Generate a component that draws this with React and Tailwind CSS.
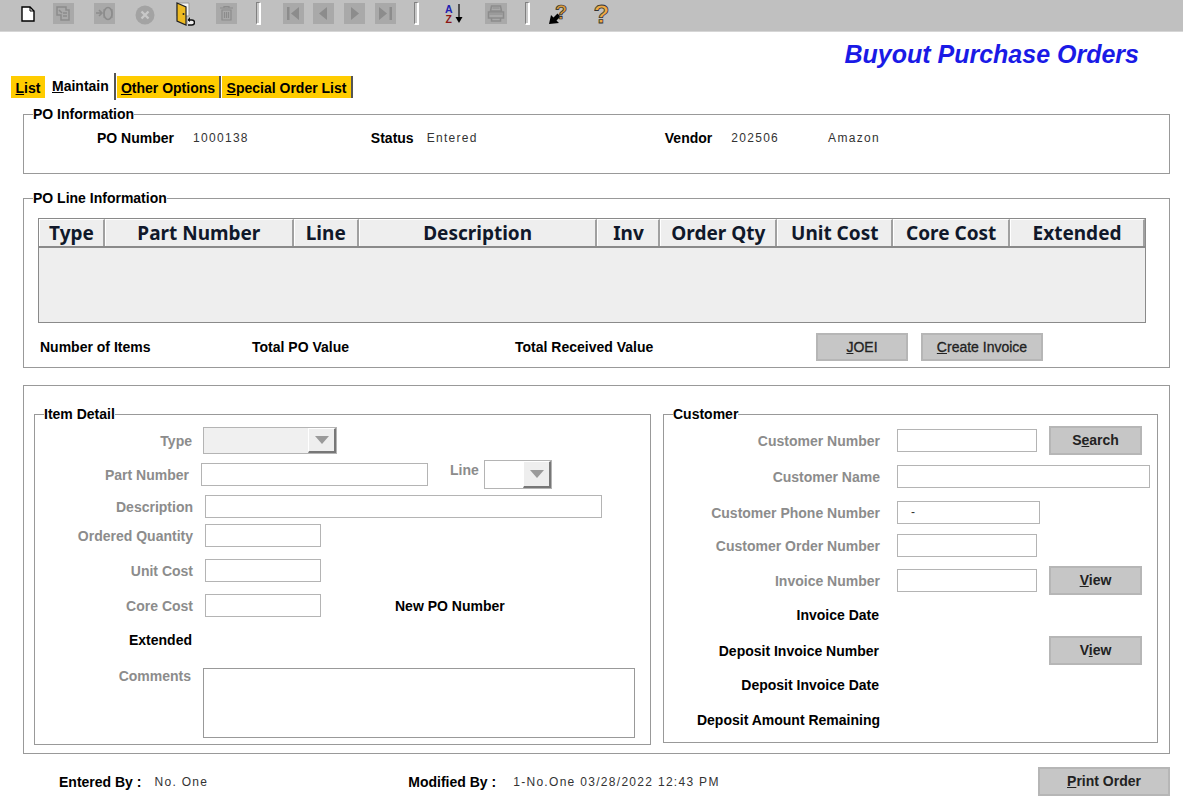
const labelGray = "font-bold text-[14px] leading-4 text-[#8c8c8c] text-right whitespace-nowrap"
const labelBlack = "font-bold text-[14px] leading-4 text-black whitespace-nowrap"
const valueText = "text-[12px] leading-4 tracking-[1.3px] text-[#333] whitespace-nowrap"
const inputBox = "h-[23px] border border-[#b4b4b4] bg-white"
const btn = "flex items-center justify-center bg-[#c6c6c6] border-2 border-[#b6b6b6] text-[14px] font-bold text-[#222]"
const legend = "ml-[9px] h-4 leading-4 font-bold text-[14px] text-black whitespace-nowrap"

const Separator = ({ className }) => (
  <div className={`w-[5px] h-[23px] mt-[2px] bg-[#c8c8c8] border-l border-t border-[#808080] border-r-2 border-b-2 border-r-white border-b-white rounded-[1px] ${className}`}></div>
)

const DisabledIcon = ({ className, children }) => (
  <svg viewBox="0 0 21 21" className={`w-[21px] h-[21px] mt-[3px] bg-[#a9a9a9] ${className}`}>
    {children}
  </svg>
)

const Toolbar = () => (
  <div className="flex items-start h-[32px] bg-[#c0c0c0] border-b border-[#d6d6d6]">
    {/* new */}
    <svg viewBox="0 0 14 16" className="w-[14px] h-[16px] mt-[6px] ml-[21px]">
      <path d="M1 1h8l4 4v10H1z" fill="#fff" stroke="#000" strokeWidth="1.4" />
      <path d="M9 1v4h4" fill="none" stroke="#000" />
    </svg>
    {/* edit */}
    <DisabledIcon className="ml-[18px]">
      <path d="M4 4h9v3h3v10H8v-5H4z" fill="none" stroke="#8c8c8c" strokeWidth="1.5" />
      <path d="M10 10h4M10 13h4M6 7l3 3" stroke="#8c8c8c" strokeWidth="1.5" />
    </DisabledIcon>
    {/* save */}
    <DisabledIcon className="ml-[20px]">
      <path d="M2 10h5M5 7l3 3-3 3" fill="none" stroke="#8c8c8c" strokeWidth="1.5" />
      <ellipse cx="14" cy="10.500" rx="4" ry="6" fill="none" stroke="#8c8c8c" strokeWidth="1.6" />
      <path d="M10 6v9M18 6v9" stroke="#8c8c8c" />
    </DisabledIcon>
    {/* cancel */}
    <svg viewBox="0 0 20 20" className="w-[20px] h-[20px] mt-[5px] ml-[20px]">
      <circle cx="10" cy="10" r="9.500" fill="#a3a3a3" />
      <path d="M6.500 6.500l7 7M13.500 6.500l-7 7" stroke="#c8c8c8" strokeWidth="2.400" />
    </svg>
    {/* exit door */}
    <svg viewBox="0 0 19 25" className="w-[19px] h-[25px] mt-[2px] ml-[21px]">
      <path d="M1 1h12v13H1z" fill="#f4f4f4" stroke="#999" />
      <path d="M1 1l9 4v18L1 19z" fill="#eebb22" stroke="#222" strokeWidth="1.200" />
      <circle cx="7.500" cy="12" r="1" fill="#222" />
      <path d="M12 18h4a2 2 0 0 1 0 5h-4" fill="#eee" stroke="#111" strokeWidth="1.500" />
      <path d="M14 15l-2.500 3 2.500 2z" fill="#111" />
    </svg>
    {/* delete */}
    <DisabledIcon className="ml-[21px]">
      <path d="M6 7h9v10H6zM4 5h13M8 5V3.500h5V5M8.500 9v6M10.500 9v6M12.500 9v6" fill="none" stroke="#8c8c8c" strokeWidth="1.200" />
    </DisabledIcon>
    <Separator className="ml-[19px]" />
    <DisabledIcon className="ml-[22px]">
      <path d="M4 4h2.500v13H4zM16 4v13L8 10.500z" fill="#8c8c8c" />
    </DisabledIcon>
    <DisabledIcon className="ml-[9px] w-[19px]">
      <path d="M14 4v13L6 10.500z" fill="#8c8c8c" />
    </DisabledIcon>
    <DisabledIcon className="ml-[10px] w-[19px]">
      <path d="M7 4v13l8-6.500z" fill="#8c8c8c" />
    </DisabledIcon>
    <DisabledIcon className="ml-[10px] w-[19px]">
      <path d="M14.500 4H17v13h-2.500zM4 4v13l8-6.500z" fill="#8c8c8c" />
    </DisabledIcon>
    <Separator className="ml-[18px]" />
    {/* sort */}
    <svg viewBox="0 0 19 20" className="w-[19px] h-[20px] mt-[4px] ml-[26px]">
      <text x="0" y="9" fontSize="10.500" fontWeight="700" fill="#2020b0" fontFamily="Liberation Sans, sans-serif">A</text>
      <text x="0.500" y="19" fontSize="10.500" fontWeight="700" fill="#8c1515" fontFamily="Liberation Sans, sans-serif">Z</text>
      <path d="M14 0v14" stroke="#000" strokeWidth="1.200" />
      <path d="M10.500 13h7L14 19z" fill="#000" />
    </svg>
    {/* print */}
    <DisabledIcon className="ml-[21px] w-[22px]">
      <path d="M6 3h9l1 5H5zM3 9h15v6H3zM6 15h9v3H6z" fill="none" stroke="#8c8c8c" strokeWidth="1.500" />
      <path d="M4 11h13M7 5h7" stroke="#8c8c8c" />
    </DisabledIcon>
    <Separator className="ml-[18px]" />
    {/* context help */}
    <svg viewBox="0 0 21 22" className="w-[21px] h-[22px] mt-[3px] ml-[19px]">
      <path d="M0 21l2-9 2.500 2.500 4-4 3 3-4 4 2.500 2.500z" fill="#000" />
      <text x="6" y="16" fontSize="20" fontWeight="700" fill="#d89a3c" stroke="#222" strokeWidth="0.700" fontFamily="Liberation Sans, sans-serif">?</text>
    </svg>
    {/* help */}
    <svg viewBox="0 0 17 24" className="w-[17px] h-[24px] mt-[3px] ml-[24px]">
      <text x="-0.500" y="20" fontSize="26" fontWeight="700" fill="#eeaa44" stroke="#333" strokeWidth="0.800" fontFamily="Liberation Sans, sans-serif">?</text>
    </svg>
  </div>
)

const Tabs = () => (
  <div className="flex items-start h-[27px] mt-[4px] ml-[11px] text-[14px] font-bold text-black leading-4">
    <div className="w-[34px] h-[22px] mt-[3px] bg-[#ffcc00] flex items-center justify-center pt-[2px]">
      <span><u>L</u>ist</span>
    </div>
    <div className="w-[71px] h-[27px] flex pl-[7px] pt-[5px] border-r-2 border-[#555]">
      <span><u>M</u>aintain</span>
    </div>
    <div className="w-[104px] h-[22px] mt-[3px] ml-[1px] bg-[#ffcc00] flex items-center justify-center pt-[2px] border-r-2 border-[#555]">
      <span><u>O</u>ther Options</span>
    </div>
    <div className="w-[131px] h-[22px] mt-[3px] ml-[1px] bg-[#ffcc00] flex items-center justify-center pt-[2px] border-r-2 border-[#555]">
      <span><u>S</u>pecial Order List</span>
    </div>
  </div>
)

const headers = [
  { title: "Type", width: "w-[66px]" },
  { title: "Part Number", width: "w-[189px]" },
  { title: "Line", width: "w-[65px]" },
  { title: "Description", width: "w-[239px]" },
  { title: "Inv", width: "w-[63px]" },
  { title: "Order Qty", width: "w-[117px]" },
  { title: "Unit Cost", width: "w-[116px]" },
  { title: "Core Cost", width: "w-[117px]" },
  { title: "Extended", width: "w-[135px]" },
]

const LineTable = () => (
  <div className="w-[1108px] h-[105px] mt-[12px] ml-[14px] bg-[#eeeeee] border border-[#8a8a8a]">
    <div className="flex h-[29px] border-b-2 border-[#8a8a8a]">
      {headers.map((h) => (
        <div
          key={h.title}
          className={`${h.width} flex items-center justify-center border-t border-l border-white border-r-2 border-r-[#a0a0a0] font-['Noto_Sans',sans-serif] font-bold text-[19px] text-[#10182a]`}
        >
          {h.title}
        </div>
      ))}
    </div>
  </div>
)

const Arrow = () => (
  <div className="w-[28px] h-full flex items-center justify-center bg-[#eeeeee] border-t border-l border-white border-r-2 border-b-2 border-r-[#777] border-b-[#777]">
    <div className="w-0 h-0 border-l-[7px] border-r-[7px] border-t-[8px] border-l-transparent border-r-transparent border-t-[#9a9a9a]"></div>
  </div>
)

const ItemDetail = () => (
  <fieldset className="w-[617px] h-[339px] border border-[#999]">
    <legend className={legend}>Item Detail</legend>
    <div className="flex items-center h-[27px] mt-[5px]">
      <div className={`${labelGray} w-[157px]`}>Type</div>
      <div className="w-[134px] h-[27px] ml-[11px] flex justify-end bg-[#f0f0f0] border border-[#b4b4b4]">
        <Arrow />
      </div>
    </div>
    <div className="flex items-center h-[29px] mt-[6px]">
      <div className={`${labelGray} w-[154px]`}>Part Number</div>
      <div className={`${inputBox} w-[227px] ml-[12px]`}></div>
      <div className={`${labelGray} w-[28px] ml-[22px] mb-[9px]`}>Line</div>
      <div className="w-[68px] h-[29px] ml-[6px] flex justify-end bg-white border border-[#b4b4b4]">
        <Arrow />
      </div>
    </div>
    <div className="flex items-center h-[23px] mt-[6px]">
      <div className={`${labelGray} w-[158px]`}>Description</div>
      <div className={`${inputBox} w-[397px] ml-[12px]`}></div>
    </div>
    <div className="flex items-center h-[23px] mt-[6px]">
      <div className={`${labelGray} w-[158px]`}>Ordered Quantity</div>
      <div className={`${inputBox} w-[116px] ml-[12px]`}></div>
    </div>
    <div className="flex items-center h-[23px] mt-[12px]">
      <div className={`${labelGray} w-[158px]`}>Unit Cost</div>
      <div className={`${inputBox} w-[116px] ml-[12px]`}></div>
    </div>
    <div className="flex items-center h-[23px] mt-[12px]">
      <div className={`${labelGray} w-[158px]`}>Core Cost</div>
      <div className={`${inputBox} w-[116px] ml-[12px]`}></div>
      <div className={`${labelBlack} ml-[74px]`}>New PO Number</div>
    </div>
    <div className="flex items-center h-4 mt-[15px]">
      <div className={`${labelBlack} w-[157px] text-right`}>Extended</div>
    </div>
    <div className="flex items-start h-[70px] mt-[20px]">
      <div className={`${labelGray} w-[156px]`}>Comments</div>
      <div className="w-[432px] h-[70px] ml-[12px] border border-[#999] bg-white"></div>
    </div>
  </fieldset>
)

const Customer = () => (
  <fieldset className="w-[495px] h-[337px] ml-[12px] border border-[#999]">
    <legend className={legend}>Customer</legend>
    <div className="flex items-center h-[29px] mt-[4px]">
      <div className={`${labelGray} w-[216px]`}>Customer Number</div>
      <div className={`${inputBox} w-[140px] ml-[17px]`}></div>
      <div className={`${btn} w-[93px] h-[29px] ml-[12px]`}>
        <span>S<u>e</u>arch</span>
      </div>
    </div>
    <div className="flex items-center h-[23px] mt-[10px]">
      <div className={`${labelGray} w-[216px]`}>Customer Name</div>
      <div className={`${inputBox} w-[253px] ml-[17px]`}></div>
    </div>
    <div className="flex items-center h-[23px] mt-[13px]">
      <div className={`${labelGray} w-[216px]`}>Customer Phone Number</div>
      <div className={`${inputBox} w-[143px] ml-[17px] pl-[13px] text-[12px] leading-[21px] text-[#333]`}>-</div>
    </div>
    <div className="flex items-center h-[23px] mt-[10px]">
      <div className={`${labelGray} w-[216px]`}>Customer Order Number</div>
      <div className={`${inputBox} w-[140px] ml-[17px]`}></div>
    </div>
    <div className="flex items-center h-[29px] mt-[9px]">
      <div className={`${labelGray} w-[216px]`}>Invoice Number</div>
      <div className={`${inputBox} w-[140px] ml-[17px]`}></div>
      <div className={`${btn} w-[93px] h-[29px] ml-[12px]`}>
        <span><u>V</u>iew</span>
      </div>
    </div>
    <div className="h-4 mt-[12px]">
      <div className={`${labelBlack} w-[215px] text-right`}>Invoice Date</div>
    </div>
    <div className="flex items-center h-[29px] mt-[13px]">
      <div className={`${labelBlack} w-[215px] text-right`}>Deposit Invoice Number</div>
      <div className={`${btn} w-[93px] h-[29px] ml-[170px]`}>
        <span>V<u>i</u>ew</span>
      </div>
    </div>
    <div className="h-4 mt-[12px]">
      <div className={`${labelBlack} w-[215px] text-right`}>Deposit Invoice Date</div>
    </div>
    <div className="h-4 mt-[19px]">
      <div className={`${labelBlack} w-[216px] text-right`}>Deposit Amount Remaining</div>
    </div>
  </fieldset>
)

const App = () => {
  return (
    <div className="w-[1183px] h-[802px] overflow-hidden bg-white font-['Liberation_Sans',Arial,sans-serif]">
      <Toolbar />

      <div className="flex justify-end h-[30px] mt-[7px] pr-[44px]">
        <h1 className="text-[25px] leading-[30px] font-bold italic text-[#1a1ae6]">Buyout Purchase Orders</h1>
      </div>

      <Tabs />

      <div className="ml-[23px] w-[1147px]">
        {/* PO Information */}
        <fieldset className="h-[68px] mt-[6px] border border-[#999]">
          <legend className={legend}>PO Information</legend>
          <div className="flex items-center mt-[8px]">
            <div className={`${labelBlack} ml-[73px]`}>PO Number</div>
            <div className={`${valueText} ml-[19px]`}>1000138</div>
            <div className={`${labelBlack} ml-[122px]`}>Status</div>
            <div className={`${valueText} ml-[13px]`}>Entered</div>
            <div className={`${labelBlack} ml-[187px]`}>Vendor</div>
            <div className={`${valueText} ml-[19px]`}>202506</div>
            <div className={`${valueText} ml-[49px]`}>Amazon</div>
          </div>
        </fieldset>

        {/* PO Line Information */}
        <fieldset className="h-[178px] mt-[16px] border border-[#999]">
          <legend className={legend}>PO Line Information</legend>
          <LineTable />
          <div className="flex items-center h-[28px] mt-[10px] ml-[16px]">
            <div className={`${labelBlack} w-[212px]`}>Number of Items</div>
            <div className={`${labelBlack} w-[263px]`}>Total PO Value</div>
            <div className={`${labelBlack} w-[301px]`}>Total Received Value</div>
            <div className={`${btn} w-[92px] h-[28px] font-normal [-webkit-text-stroke:0.3px_#222]`}>
              <span><u>J</u>OEI</span>
            </div>
            <div className={`${btn} w-[122px] h-[28px] ml-[13px] font-normal [-webkit-text-stroke:0.3px_#222]`}>
              <span><u>C</u>reate Invoice</span>
            </div>
          </div>
        </fieldset>

        {/* Item + customer */}
        <div className="flex h-[369px] mt-[17px] pt-[20px] pl-[10px] border border-[#999]">
          <ItemDetail />
          <Customer />
        </div>

        {/* Footer */}
        <div className="flex items-center h-[29px] mt-[13px]">
          <div className={`${labelBlack} ml-[36px]`}>Entered By :</div>
          <div className={`${valueText} ml-[13px]`}>No. One</div>
          <div className={`${labelBlack} ml-[200px]`}>Modified By :</div>
          <div className={`${valueText} ml-[17px] tracking-[0.9px]`}>1-No.One 03/28/2022 12:43 PM</div>
          <div className={`${btn} w-[132px] h-[29px] ml-auto`}>
            <span><u>P</u>rint Order</span>
          </div>
        </div>
      </div>
    </div>
  )
}

export default App
